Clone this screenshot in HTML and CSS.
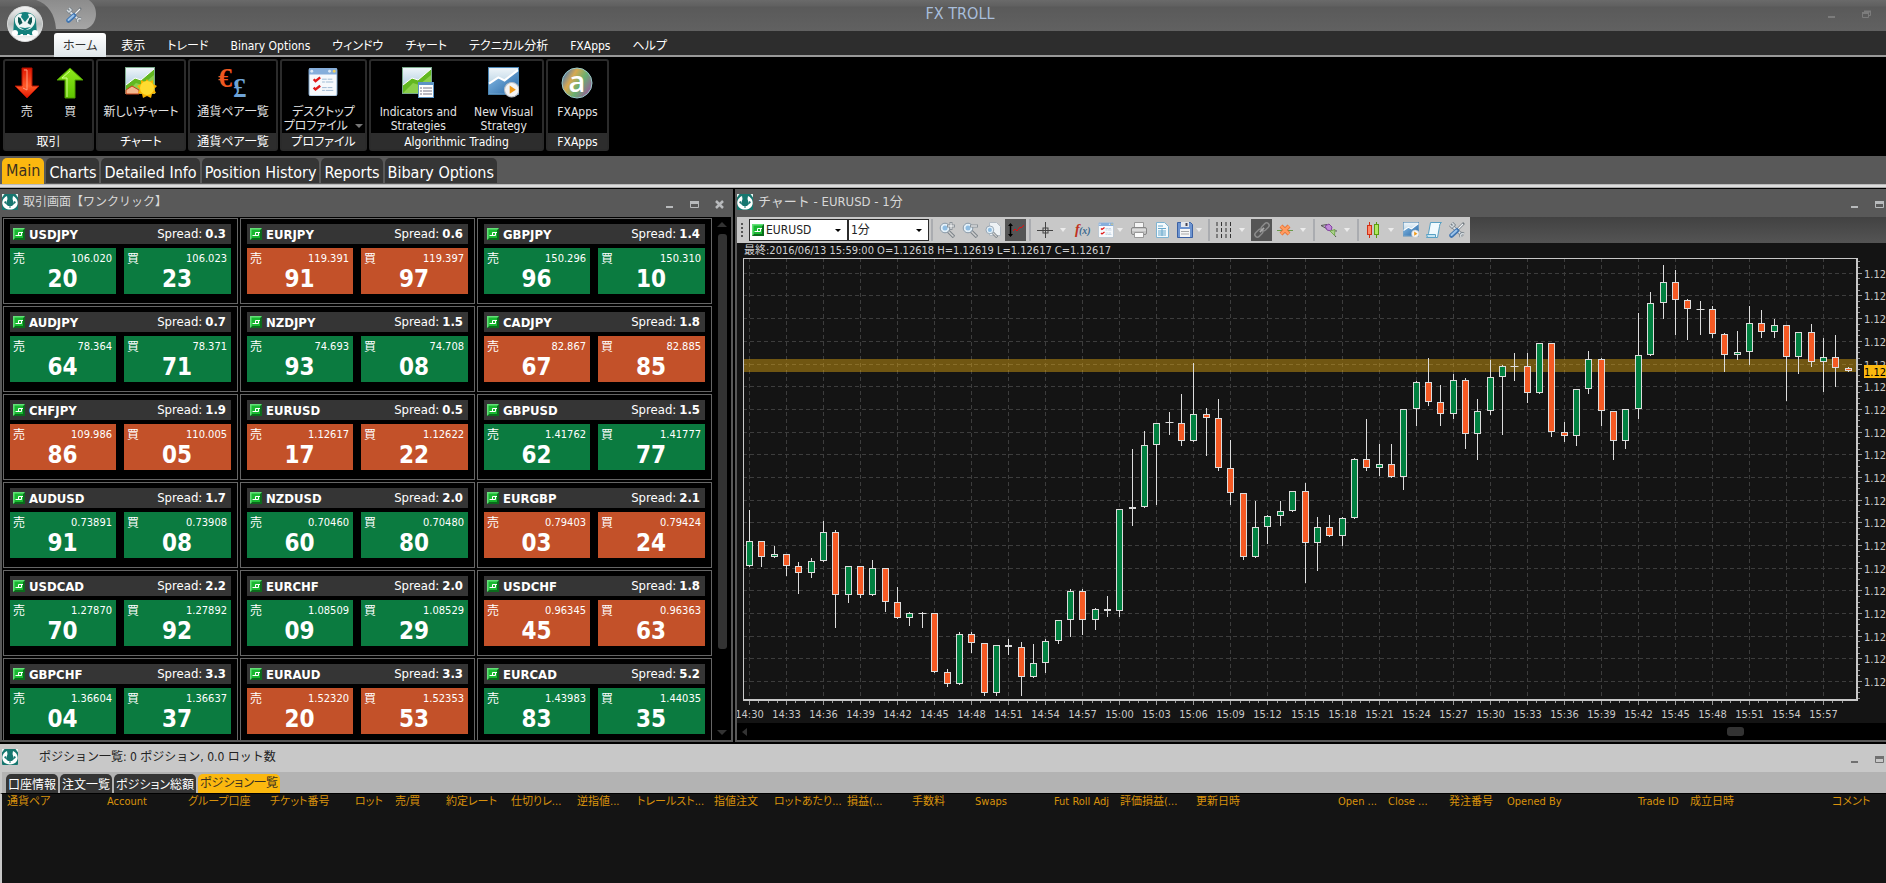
FILE: index.html
```html
<!DOCTYPE html>
<html lang="ja">
<head>
<meta charset="utf-8">
<title>FX TROLL</title>
<link rel="stylesheet" href="styles.css">
</head>
<body>

<!-- shared icons -->
<svg class="defs" aria-hidden="true">
  <defs>
    <linearGradient id="gRed" x1="0" y1="0" x2="0" y2="1"><stop offset="0" stop-color="#e01500"/><stop offset="0.6" stop-color="#ff5a28"/><stop offset="1" stop-color="#e01500"/></linearGradient>
    <linearGradient id="gGreen" x1="0" y1="0" x2="0" y2="1"><stop offset="0" stop-color="#8fe81c"/><stop offset="1" stop-color="#5fc400"/></linearGradient>
    <linearGradient id="gPic" x1="0" y1="0" x2="0" y2="1"><stop offset="0" stop-color="#f0f6fa"/><stop offset="1" stop-color="#9cc0d8"/></linearGradient>
    <linearGradient id="gBlue" x1="0" y1="0" x2="1" y2="1"><stop offset="0" stop-color="#8cc0ea"/><stop offset="1" stop-color="#2767a4"/></linearGradient>
    <linearGradient id="gQat" x1="0" y1="0" x2="0" y2="1"><stop offset="0" stop-color="#8c8c8c"/><stop offset="1" stop-color="#a6a6a6"/></linearGradient>
    <linearGradient id="gOrb" x1="0" y1="0" x2="0" y2="1"><stop offset="0" stop-color="#f4f4f4"/><stop offset="0.5" stop-color="#b8bcbc"/><stop offset="1" stop-color="#fff"/></linearGradient>
    <linearGradient id="gApp" x1="0" y1="0.2" x2="1" y2="0.8"><stop offset="0" stop-color="#3a78c0"/><stop offset="0.3" stop-color="#d8a850"/><stop offset="0.6" stop-color="#68b070"/><stop offset="1" stop-color="#a050a0"/></linearGradient>
    <symbol id="panda" viewBox="0 0 16 16">
      <rect width="16" height="16" rx="1" fill="#16766f"/>
      <path d="M0 0h2.500L0 3.500zM13.500 0H16v3.500z" fill="#e8f4f2"/>
      <path d="M5 2C2.500 3 0 6 .3 9.500 1 13.500 4 15.500 8 15.500s7-2 7.700-6C16 6 13.500 3 11 2l-.5 3 1.500 5-2 2H6l-2-2 1.500-5z" fill="#fff"/>
      <path d="M2 8l1 1.500 1.500.5L4 7zM14 8l-1 1.500-1.500.5.5-3z" fill="#16766f"/>
      <path d="M7 12.500h2v1H7z" fill="#16766f"/>
    </symbol>
    <symbol id="pair" viewBox="0 0 12 12">
      <rect width="12" height="12" fill="#0b6b1c"/>
      <path d="M0 0h12l-2 2H2v8l-2 2z" fill="#64e078"/>
      <rect x="1.500" y="1.500" width="8.500" height="8.500" fill="#18b830"/>
      <path d="M10 4.500H5.500v3M2.500 7.500H8.500v-3" fill="none" stroke="#fff"/>
    </symbol>
    <symbol id="tools" viewBox="0 0 16 16">
      <path d="M4 5l8 7" stroke="#788088" stroke-width="3.500"/>
      <path d="M4 5l8 7" stroke="#dfe4e8" stroke-width="2"/>
      <path d="M3 1l2 2-2 2-2-2" fill="none" stroke="#78828a" stroke-width="3"/>
      <path d="M3 1l2 2-2 2-2-2" fill="none" stroke="#d4dade" stroke-width="1.500"/>
      <path d="M15 12l-2-.5-1.500 1.500.5 2" fill="none" stroke="#78828a" stroke-width="3"/>
      <path d="M15 12l-2-.5-1.500 1.500.5 2" fill="none" stroke="#d4dade" stroke-width="1.500"/>
      <path d="M8 8l5-5 2-2" stroke="#727a80" stroke-width="2.500"/><path d="M8 8l6-6" stroke="#f4f6f8" stroke-width="1.200"/>
      <path d="M2.500 13.500L8 8.500" stroke="#3f74b0" stroke-width="4.500" stroke-linecap="round"/>
      <path d="M2.500 13l5-4.500" stroke="#9cc4ea" stroke-width="2" stroke-linecap="round"/>
    </symbol>
    <symbol id="magnifier" viewBox="0 0 16 16">
      <path d="M9 9l6 6" stroke="#7b8288" stroke-width="3.500"/><path d="M9.500 9.500l5 5" stroke="#d0d0d0" stroke-width="1.500"/>
      <circle cx="6" cy="6" r="4.800" fill="#e4f0f8" stroke="#8a9aa8"/>
      <circle cx="6" cy="6" r="2.500" fill="#8fbde2"/>
    </symbol>
    <symbol id="profile" viewBox="0 0 30 30">
      <rect width="30" height="30" rx="2" fill="#f6f9fc" stroke="#7fa6cc"/>
      <path d="M0 2q0-2 2-2h26q2 0 2 2v5H0z" fill="#86aedb"/>
      <circle cx="3" cy="3.500" r="1.500" fill="#dce9f6"/><circle cx="22" cy="3.500" r="1.500" fill="#dce9f6"/><circle cx="27" cy="3.500" r="1.500" fill="#f0d060"/>
      <path d="M5 12l2 2 5-4M5 21l2 2 5-4" fill="none" stroke="#e01818" stroke-width="2.500"/>
      <path d="M14 12h5m1 0h5M14 15h3m1 0h8M14 21h5m1 0h5M14 24h3m1 0h8" stroke="#9ab6d2"/>
    </symbol>
    <symbol id="picPlay" viewBox="0 0 30 30">
      <rect x="0.500" y="0.500" width="29" height="26" fill="url(#gPic)" stroke="#4a86b4"/>
      <path d="M1 26V16l9-6 6 3L29 3v23z" fill="url(#gBlue)"/>
      <path d="M1 16l9-6 6 3L29 3" fill="none" stroke="#fff" stroke-width="2"/>
      <circle cx="23" cy="22" r="7" fill="#f4f4f4" stroke="#b8bec4"/><path d="M21 18l6 4-6 4z" fill="#f09a18"/>
    </symbol>
    <symbol id="picGreen" viewBox="0 0 30 30">
      <rect x="0.500" y="0.500" width="29" height="26" fill="url(#gPic)" stroke="#7cab8c"/>
      <path d="M1 26V18l9-7 6 2L29 2v24z" fill="#62b820"/>
      <path d="M1 26l10-10 6 2L29 8v18z" fill="#8cd04c"/>
      <path d="M1 18l9-7 6 2L29 2" fill="none" stroke="#fff"/>
    </symbol>
    <symbol id="min" viewBox="0 0 9 9"><path d="M1 7h7" stroke="currentColor" stroke-width="2"/></symbol>
    <symbol id="max" viewBox="0 0 9 9"><path d="M0 2.500h9" stroke="currentColor" stroke-width="3"/><path d="M.5 2v5.500h8V2" fill="none" stroke="currentColor"/></symbol>
    <symbol id="restore" viewBox="0 0 9 9"><path d="M0 3h7M2 1.500h7" stroke="currentColor" stroke-width="2"/><path d="M.5 3v4.500h6V3M8.500 1v4.500H7" fill="none" stroke="currentColor"/></symbol>
    <symbol id="close" viewBox="0 0 9 9"><path d="M1 1l7 7M8 1L1 8" stroke="currentColor" stroke-width="2.500"/></symbol>
  </defs>
</svg>

<header class="titlebar">
  <svg class="qat" viewBox="0 0 60 30"><path d="M0 0C12 4 19 14 20 29h30c6-2 10-8 10-15S57 3 53 0z" fill="url(#gQat)"/></svg>
  <button class="qat-btn" aria-label="設定"><svg><use href="#tools"/></svg></button>
  <h1>FX TROLL</h1>
  <div class="win-btns">
    <button aria-label="最小化"><svg><use href="#min"/></svg></button>
    <button aria-label="元に戻す"><svg><use href="#restore"/></svg></button>
  </div>
</header>
<button class="orb" aria-label="メニュー">
  <svg viewBox="0 0 36 36">
    <circle cx="18" cy="18" r="17.500" fill="url(#gOrb)" stroke="#d8dada"/>
    <path d="M7 15c0-5 5-9 11-9s11 4 11 9l1 14H6z" fill="#14807c"/>
    <path d="M8 12c2-3 4-5 7-4l-1 3 4 5 4-5-1-3c3-1 5 1 7 4 1 5-2 9-5 11-3 1.500-7 1.500-10 0-3-2-6-6-5-11z" fill="#eef6f4"/>
    <path d="M11 11l2.500 1 2 5-3 2-1.500-3zM25 11l-2.500 1-2 5 3 2 1.500-3z" fill="#0c5450"/>
    <path d="M12 21l6 3.500 6-3.500-6 1z" fill="#14807c"/>
    <circle cx="8" cy="27" r="3" fill="#fff"/><circle cx="28" cy="27" r="3" fill="#fff"/>
    <path d="M12 30l2-2h2v2zM20 30v-2h2l2 2z" fill="#fff"/>
  </svg>
</button>

<nav class="menu">
  <button class="on">ホーム</button>
  <button>表示</button>
  <button>トレード</button>
  <button>Binary Options</button>
  <button>ウィンドウ</button>
  <button>チャート</button>
  <button>テクニカル分析</button>
  <button>FXApps</button>
  <button>ヘルプ</button>
</nav>

<section class="ribbon">
  <div class="group g-trade">
    <div class="items">
      <button><svg viewBox="0 0 30 32"><path d="M10 1h10v18h7L15 31 3 19h7z" fill="url(#gRed)" stroke="#b01000"/><path d="M12 3h3v20l-4-2" fill="none" stroke="#ffa080"/></svg>売</button>
      <button><svg viewBox="0 0 30 32"><path d="M10 31h10V13h8L15 1 2 13h8z" fill="url(#gGreen)" stroke="#4c9c00"/><path d="M12 30V11H7l8-7" fill="none" stroke="#d4ff90"/></svg>買</button>
    </div>
    <h2>取引</h2>
  </div>
  <div class="group g-chart">
    <div class="items">
      <button><svg viewBox="0 0 32 32"><use href="#picGreen" width="30" height="30"/><path d="M1 27v-4l6-4 7 4v4z" fill="#f4b890" stroke="#c84018"/><path d="M22 12l2 3 4-2v4l4 2-3 3 2 4-4 1-1 4-4-2-4 2-1-4-4-1 2-4-3-3 4-2v-4l4 2z" fill="#f8b400"/><circle cx="22" cy="21" r="7" fill="#ffdc30"/></svg>新しいチャート</button>
    </div>
    <h2>チャート</h2>
  </div>
  <div class="group g-pairs">
    <div class="items">
      <button><svg viewBox="0 0 32 32"><text x="1" y="20" class="euro">€</text><text x="16" y="30" class="pound">£</text></svg>通貨ペア一覧</button>
    </div>
    <h2>通貨ペア一覧</h2>
  </div>
  <div class="group g-desk">
    <div class="items">
      <button><svg viewBox="-1 -1 32 32"><use href="#profile" width="30" height="28"/></svg>デスクトップ<br>プロファイル <i class="drop"></i></button>
    </div>
    <h2>プロファイル</h2>
  </div>
  <div class="group g-algo">
    <div class="items">
      <button><svg viewBox="0 0 32 32"><use href="#picGreen" width="30" height="30"/><rect x="16.500" y="15.500" width="15" height="15" fill="#fff" stroke="#5b93c4"/><path d="M17 17h14" stroke="#5b93c4" stroke-width="2"/><path d="M18 21h2m1 0h9M18 24h2m1 0h9M18 27h2m1 0h9" stroke="#778"/></svg>Indicators and<br>Strategies</button>
      <button><svg viewBox="0 0 32 32"><use href="#picPlay" width="31" height="31"/></svg>New Visual<br>Strategy</button>
    </div>
    <h2>Algorithmic Trading</h2>
  </div>
  <div class="group g-apps">
    <div class="items">
      <button><svg viewBox="0 0 32 32"><circle cx="16" cy="16" r="15" fill="url(#gApp)" stroke="#9cc"/><text x="16" y="25" class="app-a">a</text></svg>FXApps</button>
    </div>
    <h2>FXApps</h2>
  </div>
</section>

<nav class="pages">
  <button class="on">Main</button>
  <button>Charts</button>
  <button>Detailed Info</button>
  <button>Position History</button>
  <button>Reports</button>
  <button>Bibary Options</button>
</nav>

<main class="workspace">
  <section class="pane">
    <header class="pane-title">
      <svg class="logo"><use href="#panda"/></svg>
      <h2>取引画面【ワンクリック】</h2>
      <div class="win-btns">
        <button aria-label="最小化"><svg><use href="#min"/></svg></button>
        <button aria-label="最大化"><svg><use href="#max"/></svg></button>
        <button aria-label="閉じる"><svg><use href="#close"/></svg></button>
      </div>
    </header>
    <div class="quotes">
      <div class="cards" id="cards"></div>
      <div class="vscroll"><i class="up"></i><i class="thumb"></i><i class="down"></i></div>
    </div>
  </section>

  <section class="pane">
    <header class="pane-title">
      <svg class="logo"><use href="#panda"/></svg>
      <h2>チャート - EURUSD - 1分</h2>
      <div class="win-btns">
        <button aria-label="最小化"><svg><use href="#min"/></svg></button>
        <button aria-label="最大化"><svg><use href="#max"/></svg></button>
      </div>
    </header>
    <div class="toolrow">
      <div class="toolbar">
        <i class="grip"></i>
        <div class="combo pair-combo"><svg><use href="#pair"/></svg><select aria-label="通貨ペア"><option>EURUSD</option></select></div>
        <div class="combo"><select aria-label="足種"><option>1分</option></select></div>
        <i class="sep"></i>
        <button aria-label="拡大"><svg viewBox="0 0 16 16"><use href="#magnifier"/><path d="M8 4h8M12 0v8" stroke="#8d949a" stroke-width="3"/><path d="M9 4h6M12 1v6" stroke="#fff"/></svg></button>
        <button aria-label="縮小"><svg viewBox="0 0 16 16"><use href="#magnifier"/><path d="M8 4h8" stroke="#8d949a" stroke-width="3"/><path d="M9 4h6" stroke="#fff"/></svg></button>
        <button aria-label="全体表示"><svg viewBox="0 0 16 16"><path d="M4.500.5h7l4 4v9h-11z" fill="#eef2f5" stroke="#b4bcc4"/><use href="#magnifier" y="3" width="13" height="13"/></svg></button>
        <button class="pressed" aria-label="自動スケール"><svg viewBox="0 0 16 16"><path d="M2.500 2v12" stroke="#000" stroke-width="1.500"/><path d="M0 4l2.500-3L5 4zM0 12l2.500 3L5 12z"/><path d="M5 9l2-2 2 2 3-4 1 1 3-3" fill="none" stroke="#e01010"/></svg></button>
        <i class="sep"></i>
        <button aria-label="十字カーソル"><svg viewBox="0 0 16 16"><path d="M8.500 0v16M0 8.500h16" stroke="#444"/><rect x="6" y="6" width="5" height="5" fill="none" stroke="#444"/></svg></button>
        <i class="arrow"></i>
        <button aria-label="関数"><svg viewBox="0 0 16 16"><text x="0" y="12" class="fx-f">f</text><text x="4" y="12" class="fx-x">(x)</text></svg></button>
        <button aria-label="プロファイル"><svg viewBox="-1 -1 32 32"><use href="#profile" width="30" height="30"/></svg></button>
        <i class="arrow tight"></i>
        <button aria-label="印刷"><svg viewBox="0 0 16 16"><path d="M3.500.5h9v6h-9z" fill="#f4f4f4" stroke="#999"/><rect x=".5" y="5.500" width="15" height="7" rx="1.500" fill="#c4c4c4" stroke="#888"/><path d="M1 8h14" stroke="#f0f0f0"/><path d="M3.500 10.500h9v5h-9z" fill="#fafafa" stroke="#999"/></svg></button>
        <button aria-label="文書"><svg viewBox="0 0 16 16"><path d="M2.500.5h8l4 4v11h-12z" fill="#f4fafd" stroke="#7fb4d2"/><path d="M4 4h5M4 6.500h8M4 9h8M4 11h8M4 13h8M8 6v8" stroke="#68a8cc"/></svg></button>
        <button aria-label="保存"><svg viewBox="0 0 16 16"><path d="M.5.5h13l2 2v13H.5z" fill="#6d94d0" stroke="#3b61a4"/><rect x="4" y="0" width="8" height="5" fill="#e4e8ee"/><path d="M9.500 1v3" stroke="#445" stroke-width="2"/><rect x="3" y="7" width="10" height="8" fill="#f6f6f6"/><path d="M4 9.500h8M4 12h8" stroke="#aaa"/></svg></button>
        <i class="arrow tight"></i>
        <i class="sep"></i>
        <button aria-label="グリッド"><svg viewBox="0 0 16 16"><path d="M1 0v16M5.500 0v16M10 0v16M14.500 0v16" stroke="#333" stroke-dasharray="4 2"/></svg></button>
        <i class="arrow"></i>
        <button class="pressed" aria-label="リンク"><svg viewBox="0 0 16 16"><g fill="none" stroke="#8a8a8a" stroke-width="1.500" transform="rotate(-45 8 8)"><rect x="-1" y="5.500" width="9" height="5" rx="2.500"/><rect x="8" y="5.500" width="9" height="5" rx="2.500"/><path d="M5 8h6" stroke="#aaa"/></g></svg></button>
        <button aria-label="削除"><svg viewBox="0 0 16 16"><path d="M0 8.500h16" stroke="#6a9a4a"/><path d="M4 4l8 8M12 4l-8 8" stroke="#e06a30" stroke-width="4"/><path d="M4 4l8 8M12 4l-8 8" stroke="#ff9c60" stroke-width="2.500"/></svg></button>
        <i class="arrow"></i>
        <i class="sep"></i>
        <button aria-label="図形"><svg viewBox="0 0 16 16"><path d="M0 3.500l6-1M0 3.500l9 5 7 .5M9 8l6 7" fill="none" stroke="#555"/><path d="M4 4l4-2 3 3-1 4-4-1z" fill="#c08ad8" stroke="#8444a0"/><path d="M9 9l5-1.500-.5 6z" fill="#a8d088" stroke="#74a850"/></svg></button>
        <i class="arrow"></i>
        <i class="sep"></i>
        <button aria-label="ローソク足"><svg viewBox="0 0 16 16"><path d="M4.500 0v16" stroke="#d03018"/><path d="M11.500 0v16" stroke="#5a9c10"/><rect x="2.500" y="3.500" width="4" height="9" fill="#ff8868" stroke="#d03018"/><rect x="9.500" y="2.500" width="4" height="10" fill="#b0e860" stroke="#5a9c10"/></svg></button>
        <i class="arrow"></i>
        <button aria-label="ストラテジー"><svg><use href="#picPlay"/></svg></button>
        <button aria-label="スクリプト"><svg viewBox="0 0 16 16"><path d="M4.500.5h11q-2 1-2 4l-2 11H.5q2-1 2-4z" fill="#f0fafe" stroke="#58a0c4"/><path d="M.5 12.500h9v3h-8z" fill="#c4e4f2" stroke="#58a0c4"/></svg></button>
        <button aria-label="設定"><svg><use href="#tools"/></svg></button>
      </div>
    </div>
    <div class="chart">
      <p class="ohlc">最終:2016/06/13 15:59:00 O=1.12618 H=1.12619 L=1.12617 C=1.12617</p>
      <svg class="plot" id="plot"></svg>
    </div>
    <div class="hscroll"><i class="left"></i><i class="thumb"></i></div>
  </section>
</main>

<section class="positions">
  <header class="pane-title light">
    <svg class="logo"><use href="#panda"/></svg>
    <h2>ポジション一覧: 0 ポジション, 0.0 ロット数</h2>
    <div class="win-btns">
      <button aria-label="最小化"><svg><use href="#min"/></svg></button>
      <button aria-label="最大化"><svg><use href="#max"/></svg></button>
    </div>
  </header>
  <nav class="subtabs">
    <button>口座情報</button>
    <button>注文一覧</button>
    <button>ポジション総額</button>
    <button class="on">ポジション一覧</button>
  </nav>
  <div class="grid">
    <table>
      <thead>
        <tr>
          <th>通貨ペア</th><th>Account</th><th>グループ口座</th><th>チケット番号</th><th>ロット</th>
          <th>売/買</th><th>約定レート</th><th>仕切りレ...</th><th>逆指値...</th><th>トレールスト...</th>
          <th>指値注文</th><th>ロットあたり...</th><th>損益(...</th><th>手数料</th><th>Swaps</th>
          <th>Fut Roll Adj</th><th>評価損益(...</th><th>更新日時</th><th>Open ...</th><th>Close ...</th>
          <th>発注番号</th><th>Opened By</th><th>Trade ID</th><th>成立日時</th><th>コメント</th>
        </tr>
      </thead>
    </table>
  </div>
</section>

<script src="app.js"></script>
</body>
</html>
```
FILE: styles.css
```css
* {
  box-sizing: border-box;
}
body {
  margin: 0;
  height: 100vh;
  display: flex;
  flex-direction: column;
  overflow: hidden;
  background: #000;
  color: #fff;
  font-family: "DejaVu Sans Condensed", "Noto Sans CJK JP", sans-serif;
  font-size: 12px;
  line-height: 16px;
}
button {
  border: 0;
  padding: 0;
  background: none;
  color: inherit;
  font: inherit;
}
h1, h2, p {
  margin: 0;
  font-size: inherit;
  font-weight: normal;
}
svg {
  display: block;
}
.defs {
  position: absolute;
  width: 0;
  height: 0;
}

/* title bar */
.titlebar {
  position: relative;
  flex: none;
  height: 31px;
  display: flex;
  align-items: center;
  justify-content: center;
  background: linear-gradient(#6a6a6a, #606060 6px, #5a5a5a 7px, #616161);
}
.titlebar h1 {
  padding: 0 0 3px 34px;
  color: #a9bedb;
  font-size: 16px;
}
.qat {
  position: absolute;
  left: 36px;
  top: 0;
  width: 60px;
  height: 30px;
}
.qat-btn {
  position: absolute;
  left: 66px;
  top: 7px;
}
.qat-btn svg {
  width: 16px;
  height: 16px;
}
.orb {
  position: absolute;
  left: 7px;
  top: 6px;
  width: 36px;
  height: 36px;
}
.win-btns {
  display: flex;
  gap: 16px;
  margin-left: auto;
  color: #b8babc;
}
.win-btns svg {
  width: 9px;
  height: 9px;
}
.titlebar .win-btns {
  position: absolute;
  right: 15px;
  top: 10px;
  gap: 26px;
  color: #7c7c7c;
}

/* menu */
.menu {
  flex: none;
  height: 26px;
  display: flex;
  align-items: flex-end;
  padding-left: 54px;
  background: #2d2d2d;
  border-bottom: 2px solid #999;
  font-feature-settings: "palt";
}
.menu button {
  height: 22px;
  padding: 4px 11px 0;
}
.menu .on {
  margin: 0 4px -2px 0;
  height: 24px;
  padding: 2px 9px 0;
  border-radius: 3px 3px 0 0;
  background: linear-gradient(#fff, #dfe6ea);
  color: #333;
}

/* ribbon */
.ribbon {
  flex: none;
  height: 99px;
  display: flex;
  gap: 2px;
  padding: 2px 3px;
  font-feature-settings: "palt";
}
.group {
  height: 92px;
  display: flex;
  flex-direction: column;
  border: 2px solid #2b2b2b;
  border-radius: 3px;
}
.g-trade { width: 91px; }
.g-chart, .g-pairs { width: 90px; }
.g-desk { width: 87px; }
.g-algo { width: 175px; }
.g-apps { width: 63px; }
.items {
  flex: 1;
  display: flex;
  justify-content: space-around;
  padding-top: 6px;
}
.items button {
  display: flow-root;
  align-self: flex-start;
  color: #e4e4e4;
  line-height: 14px;
  white-space: nowrap;
}
.items svg {
  width: 32px;
  height: 32px;
  margin: 0 auto 6px;
  overflow: visible;
}
.group h2 {
  height: 16px;
  background: #2d2d2d;
  text-align: center;
  line-height: 18px;
}
.drop {
  display: inline-block;
  margin-left: 4px;
  border: 4px solid transparent;
  border-top-color: #777;
  border-bottom: 0;
  vertical-align: 2px;
}
.euro, .pound {
  font-family: "Liberation Serif", serif;
  font-weight: bold;
  font-size: 28px;
  fill: #f05820;
}
.pound {
  font-size: 27px;
  fill: #6ea4d8;
}
.app-a {
  font-family: "Open Sans", sans-serif;
  font-size: 29px;
  font-weight: 600;
  text-anchor: middle;
  fill: #fff;
}

/* page tabs */
.pages {
  flex: none;
  height: 33px;
  display: flex;
  gap: 2px;
  padding: 2px 2px 0;
  background: linear-gradient(#595959 28px, #9a9a9a 28px, #ddd 29px, #ddd 31px, #aaa 31px, #aaa 32px, #000 32px);
  font-size: 16px;
}
.pages button {
  height: 25px;
  padding: 4px 3px 0;
  border-radius: 5px 5px 0 0;
  background: #353535;
}
.pages .on {
  height: 26px;
  padding: 0 4px 1px;
  background: #fbb80f;
  color: #3a3020;
}

/* panes */
.workspace {
  flex: 1;
  min-height: 0;
  display: grid;
  grid-template-columns: 733px 1fr;
  gap: 2px;
  padding-bottom: 2px;
}
.pane {
  min-width: 0;
  min-height: 0;
  display: flex;
  flex-direction: column;
  border: 2px solid #595959;
  border-top: 0;
}
.pane + .pane {
  border-right: 0;
}
.pane-title {
  flex: none;
  height: 28px;
  display: flex;
  align-items: center;
  padding: 0 7px 2px 0;
  background: #595959;
  color: #d8d8d8;
}
.pane-title h2 {
  padding: 0 0 1px 5px;
}
.pane + .pane .pane-title,
.pane-title.light {
  padding-right: 2px;
}
.pane + .pane h2 {
  font-size: 13px;
}
.pane-title .win-btns {
  padding-top: 4px;
}
.logo {
  width: 16px;
  height: 16px;
}

/* quotes */
.quotes {
  flex: 1;
  min-height: 0;
  display: flex;
  overflow: hidden;
}
.cards {
  flex: 1;
  display: grid;
  grid-template-columns: repeat(3, 235px);
  grid-auto-rows: 86px;
  gap: 2px;
  padding: 1px;
}
.card {
  border: 1px solid #666;
  padding: 5px 6px;
}
.card-head {
  height: 20px;
  display: flex;
  align-items: center;
  padding: 0 5px 0 3px;
  background: #353535;
  font-size: 13px;
}
.card-head svg {
  width: 12px;
  height: 12px;
}
.card-head strong {
  flex: 1;
  padding: 1px 0 0 4px;
}
.card-head b {
  margin-left: 3px;
}
.deal {
  display: grid;
  grid-template-columns: 106px 1fr;
  gap: 8px;
  margin-top: 4px;
}
.deal button {
  height: 46px;
  display: grid;
  grid-template: 21px 20px / auto auto;
  align-content: start;
  padding: 0 4px 0 3px;
  background: #c35129;
}
.deal.up button {
  background: #0b7b40;
}
.deal span {
  text-align: left;
  line-height: 22px;
}
.deal small {
  text-align: right;
  font-size: 11px;
  line-height: 21px;
}
.deal b {
  grid-column: 1 / 3;
  font-size: 24px;
  line-height: 20px;
}
.vscroll {
  display: flex;
  flex-direction: column;
  align-items: center;
  width: 18px;
  padding: 5px 4px;
}
.vscroll .up {
  border: 5px solid transparent;
  border-bottom-color: #333;
  border-top: 0;
}
.vscroll .thumb {
  width: 9px;
  height: 415px;
  margin: 7px 0 auto;
  border-radius: 3px;
  background: #333;
}
.vscroll .down {
  border: 5px solid transparent;
  border-top-color: #333;
  border-bottom: 0;
}

/* chart toolbar */
.toolrow {
  flex: none;
  display: flex;
  height: 26px;
  background: linear-gradient(#424242, #545454);
}
.toolbar {
  display: flex;
  align-items: center;
  padding: 0 2px 0 4px;
  background: #c8c8c8;
}
.toolbar button {
  width: 21px;
  height: 22px;
  margin: 0 1px;
  display: flex;
  align-items: center;
  justify-content: center;
}
.toolbar button svg {
  width: 16px;
  height: 16px;
  overflow: visible;
}
.toolbar .pressed {
  background: #555;
}
.grip {
  width: 2px;
  height: 15px;
  margin-right: 6px;
  background: repeating-linear-gradient(#555 0 2px, transparent 2px 4px);
}
.combo {
  position: relative;
  width: 81px;
}
.pair-combo {
  width: 99px;
}
.combo svg {
  position: absolute;
  left: 3px;
  top: 5px;
  width: 12px;
  height: 12px;
}
.combo select {
  display: block;
  width: 100%;
  height: 22px;
  padding: 0 2px;
  border: 1px solid #2b2b2b;
  border-radius: 0;
  background: #fff;
  color: #222;
  font: inherit;
  appearance: none;
}
.combo::after {
  content: "";
  position: absolute;
  right: 7px;
  top: 10px;
  border: 3px solid transparent;
  border-top-color: #000;
  border-bottom: 0;
}
.pair-combo select {
  padding-left: 16px;
}
.sep {
  width: 2px;
  height: 22px;
  margin: 0 2px;
  background: #aaacb0;
}
.arrow {
  width: 6px;
  margin: 0 5px 0 4px;
  border: 3px solid transparent;
  border-top: 4px solid #ececec;
  border-bottom: 0;
}
.arrow.tight {
  margin: 0 4px 0 0;
}
.fx-f, .fx-x {
  font-family: "Liberation Serif", serif;
  font-style: italic;
  font-weight: bold;
  font-size: 14px;
  fill: #c03020;
}
.fx-x {
  font-size: 10px;
  fill: #3a6a90;
}

/* chart */
.chart {
  flex: 1;
  min-height: 0;
  display: flex;
  flex-direction: column;
  background: #141414;
}
.ohlc {
  flex: none;
  height: 14px;
  padding-left: 7px;
  color: #d0d0d0;
  font-size: 11px;
  line-height: 16px;
}
.plot {
  flex: 1;
  width: 100%;
  min-height: 0;
  overflow: hidden;
}
.plot .grid-line { stroke: #3d3d3d; stroke-dasharray: 4 3; }
.plot .frame { stroke: #c8c8c8; fill: none; }
.plot .axis { stroke: #c8c8c8; stroke-width: 2; }
.plot .tick { stroke: #999; }
.plot .wick { stroke: #ddd; }
.plot .body { stroke: #ddd; fill: #f55a24; }
.plot .body.up { fill: #008040; }
.plot .band { fill: #fbb80f; fill-opacity: 0.4; }
.plot .tag { fill: #fbb80f; }
.plot text { fill: #c8c8c8; font-size: 11px; }
.plot .time { text-anchor: middle; }
.plot .now { fill: #000; }
.hscroll {
  flex: none;
  position: relative;
  height: 17px;
}
.hscroll .left {
  position: absolute;
  left: 5px;
  top: 5px;
  border: 4px solid transparent;
  border-right: 5px solid #333;
  border-left: 0;
}
.hscroll .thumb {
  position: absolute;
  right: 142px;
  top: 4px;
  width: 17px;
  height: 9px;
  border-radius: 3px;
  background: #333;
}

/* positions */
.positions {
  flex: none;
  height: 139px;
  display: flex;
  flex-direction: column;
}
.pane-title.light {
  padding-left: 2px;
  background: #c8c8c8;
  color: #222;
}
.light h2 {
  padding-left: 21px;
}
.light .win-btns {
  color: #707070;
}
.subtabs {
  flex: none;
  height: 22px;
  display: flex;
  gap: 2px;
  padding: 2px 4px 0;
  background: #b3b3b3;
  border-bottom: 1px solid #000;
  border-left: 2px solid #c8c8c8;
  font-feature-settings: "palt";
}
.subtabs button {
  padding: 3px 2px 0;
  border-radius: 5px 5px 0 0;
  background: #353535;
}
.subtabs .on {
  padding: 0 2px 1px;
  background: #fbb80f;
  color: #3a3020;
}
.grid {
  flex: 1;
  border-left: 2px solid #c8c8c8;
  padding: 1px 0 0 5px;
  background: #141414;
}
table {
  width: 100%;
  table-layout: fixed;
  border-collapse: collapse;
  color: #d8920c;
  font-feature-settings: "palt";
}
th {
  padding: 0;
  font-size: 11px;
  font-weight: normal;
  line-height: 14px;
  text-align: left;
  white-space: nowrap;
}
th:nth-child(1) { width: 100px; }
th:nth-child(2) { width: 81px; }
th:nth-child(3) { width: 82px; }
th:nth-child(4) { width: 85px; }
th:nth-child(5) { width: 40px; }
th:nth-child(6) { width: 51px; }
th:nth-child(7) { width: 65px; }
th:nth-child(8) { width: 66px; }
th:nth-child(9) { width: 60px; }
th:nth-child(10) { width: 77px; }
th:nth-child(11) { width: 60px; }
th:nth-child(12) { width: 73px; }
th:nth-child(13) { width: 65px; }
th:nth-child(14) { width: 63px; }
th:nth-child(15) { width: 79px; }
th:nth-child(16) { width: 66px; }
th:nth-child(17) { width: 76px; }
th:nth-child(18) { width: 142px; }
th:nth-child(19) { width: 50px; }
th:nth-child(20) { width: 61px; }
th:nth-child(21) { width: 58px; }
th:nth-child(22) { width: 131px; }
th:nth-child(23) { width: 52px; }
th:nth-child(24) { width: 142px; }
```
FILE: app.js
```js
// pair, spread, sell, buy, going up
var quotes = [
  ["USDJPY", "0.3", "106.020", "106.023", 1],
  ["EURJPY", "0.6", "119.391", "119.397", 0],
  ["GBPJPY", "1.4", "150.296", "150.310", 1],
  ["AUDJPY", "0.7", "78.364", "78.371", 1],
  ["NZDJPY", "1.5", "74.693", "74.708", 1],
  ["CADJPY", "1.8", "82.867", "82.885", 0],
  ["CHFJPY", "1.9", "109.986", "110.005", 0],
  ["EURUSD", "0.5", "1.12617", "1.12622", 0],
  ["GBPUSD", "1.5", "1.41762", "1.41777", 1],
  ["AUDUSD", "1.7", "0.73891", "0.73908", 1],
  ["NZDUSD", "2.0", "0.70460", "0.70480", 1],
  ["EURGBP", "2.1", "0.79403", "0.79424", 0],
  ["USDCAD", "2.2", "1.27870", "1.27892", 1],
  ["EURCHF", "2.0", "1.08509", "1.08529", 1],
  ["USDCHF", "1.8", "0.96345", "0.96363", 0],
  ["GBPCHF", "3.3", "1.36604", "1.36637", 1],
  ["EURAUD", "3.3", "1.52320", "1.52353", 0],
  ["EURCAD", "5.2", "1.43983", "1.44035", 1]
];

function dealButton(label, price) {
  return '<button><span>' + label + '</span><small>' + price + '</small><b>' + price.slice(-2) + '</b></button>';
}

document.getElementById("cards").innerHTML = quotes.map(function (q) {
  return '<div class="card"><div class="card-head"><svg><use href="#pair"/></svg><strong>' + q[0] +
    '</strong>Spread: <b>' + q[1] + '</b></div><div class="deal' + (q[4] ? " up" : "") + '">' +
    dealButton("売", q[2]) + dealButton("買", q[3]) + '</div></div>';
}).join("");

// one candle a minute from 14:30: high, body top, body bottom, low, up
// heights are measured down the plot, three units to the pixel
var candles = [
  [810,903,977,980,1],[903,903,950,980,0],[917,942,950,953,1],[942,942,977,1007,0],[965,978,998,1061,0],
  [954,963,998,1013,1],[843,877,962,965,1],[870,877,1064,1163,0],[978,978,1064,1088,1],[978,978,1064,1073,0],
  [960,984,1064,1067,1],[984,984,1085,1115,0],[1041,1086,1133,1136,0],[1116,1119,1133,1157,1],[1116,1118,1118,1163,1],
  [1119,1119,1295,1298,0],[1287,1296,1331,1340,0],[1176,1182,1331,1334,1],[1176,1182,1208,1238,0],[1209,1209,1358,1367,0],
  [1215,1215,1358,1367,1],[1197,1215,1220,1244,1],[1206,1221,1310,1367,0],[1212,1269,1310,1313,1],[1197,1203,1268,1298,1],
  [1140,1140,1202,1211,1],[1047,1053,1139,1190,1],[1047,1053,1139,1184,0],[1104,1107,1139,1169,1],[1068,1107,1112,1130,1],
  [807,807,1112,1130,1],[627,801,806,857,1],[573,615,800,803,1],[549,549,614,795,1],[516,547,547,585,1],
  [462,549,602,617,0],[369,522,602,605,1],[504,522,533,647,0],[477,534,683,692,0],[600,684,758,795,0],
  [759,759,950,959,0],[783,861,950,953,1],[825,828,860,911,1],[783,813,827,857,1],[753,753,812,815,1],
  [729,753,908,1028,0],[831,861,908,992,1],[825,861,887,890,0],[831,834,887,917,1],[654,657,833,836,1],
  [537,657,683,692,0],[612,672,683,708,1],[612,672,710,713,0],[507,507,710,749,1],[423,426,506,557,1],
  [354,426,485,497,0],[435,486,521,557,0],[402,420,521,536,1],[414,420,581,626,0],[477,513,581,659,1],
  [360,411,512,524,1],[375,378,410,585,1],[339,377,377,422,1],[339,378,458,488,0],[309,309,458,461,1],
  [309,309,575,590,0],[546,576,587,605,0],[447,447,587,617,1],[333,357,446,461,1],[354,357,512,557,0],
  [513,513,602,659,0],[507,507,602,626,1],[219,345,506,536,1],[156,189,344,347,1],[75,126,188,237,1],
  [90,126,179,285,0],[177,180,206,300,0],[183,206,206,285,1],[198,207,281,293,0],[279,282,344,395,0],
  [273,336,344,359,1],[198,249,335,375,1],[210,249,275,293,0],[237,255,275,293,1],[255,255,350,482,0],
  [276,276,350,401,1],[252,276,365,380,0],[294,351,365,455,1],[285,351,383,440,0],[381,384,392,395,0]
];

var LEFT = 6, RIGHT = 1120, TOP = 1, BOTTOM = 443;
var STEP = 12.345, ROW = 22.68;
var out = "";

function line(cls, x1, y1, x2, y2) {
  out += '<line class="' + cls + '" x1="' + x1 + '" y1="' + y1 + '" x2="' + x2 + '" y2="' + y2 + '"/>';
}
function half(n) {
  return Math.floor(n) + 0.5;
}
function toY(units) {
  return Math.round(units / 3) - 17;
}
function candleX(i) {
  return half(12.5 + i * STEP);
}

var i, x, y;

// grid and axis labels
for (i = 0; i < 90; i += 3) {
  x = candleX(i);
  line("grid-line", x, TOP, x, BOTTOM);
  line("tick", x, BOTTOM, x, BOTTOM + 5);
  y = 14 * 60 + 30 + i;
  out += '<text class="time" x="' + x + '" y="461">' + Math.floor(y / 60) + ":" + ("0" + y % 60).slice(-2) + '</text>';
}
for (i = 0; i < 19; i++) {
  y = half(16.3 + i * ROW);
  line("grid-line", LEFT, y, RIGHT, y);
  line("tick", RIGHT, y, RIGHT + 5, y);
  out += '<text x="1127" y="' + (y + 4.5) + '">1.12</text>';
}
for (i = 0; i < 119; i++) {
  x = half(12.5 + i * STEP * 0.75);
  line("tick", x, BOTTOM, x, BOTTOM + 3);
}
for (i = -2; i < 76; i++) {
  y = half(16.3 + i * ROW / 4);
  line("tick", RIGHT, y, RIGHT + 3, y);
}

// band between sell and buy
out += '<rect class="band" x="6" y="102" width="1114" height="13"/>';

candles.forEach(function (c, n) {
  var cx = candleX(n), top = toY(c[1]), h = toY(c[2]) - top;
  line("wick", cx, toY(c[0]), cx, toY(c[3]));
  if (h < 2) {
    line("wick", cx - 4, top + 0.5, cx + 4, top + 0.5);
  } else {
    out += '<rect class="body' + (c[4] ? " up" : "") + '" x="' + (cx - 3) + '" y="' + (top + 0.5) + '" width="6" height="' + (h - 1) + '"/>';
  }
});

line("frame", LEFT, TOP + 0.5, RIGHT, TOP + 0.5);
line("frame", LEFT + 0.5, TOP, LEFT + 0.5, BOTTOM);
line("axis", LEFT, BOTTOM, RIGHT + 1, BOTTOM);
line("axis", RIGHT, TOP, RIGHT, BOTTOM);

// current price
out += '<rect class="tag" x="1127" y="108" width="60" height="13"/><text class="now" x="1127" y="119">1.12</text>';

document.getElementById("plot").innerHTML = out;
```
